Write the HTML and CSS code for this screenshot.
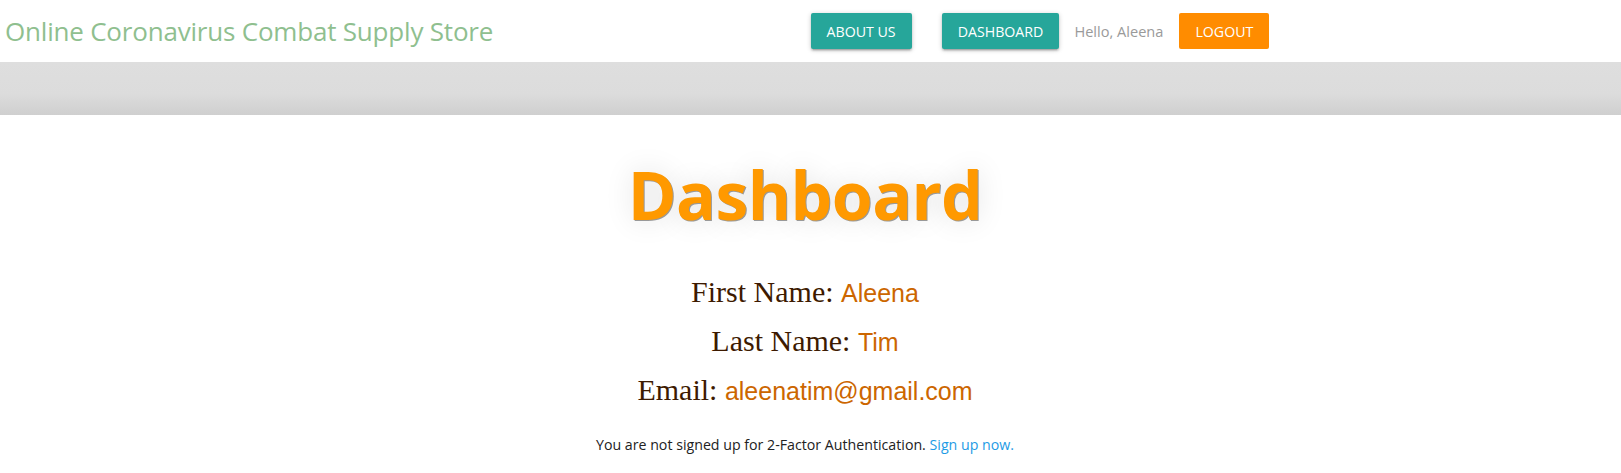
FILE: index.html
```html
<!DOCTYPE html>
<html lang="en">
<head>
<meta charset="utf-8">
<title>Dashboard</title>
<link rel="stylesheet" href="styles.css">
</head>
<body>
<nav class="topnav">
  <div class="brand-side">
    <a class="brand" href="#">Online Coronavirus Combat Supply Store</a>
  </div>
  <ul class="links">
    <li><a class="btn btn-teal" href="#">About Us</a></li>
    <li class="gap-wide"><a class="btn btn-teal" href="#">Dashboard</a></li>
    <li class="hello">Hello, Aleena</li>
    <li><a class="btn btn-orange" href="#">Logout</a></li>
  </ul>
</nav>
<div class="banner"></div>
<main class="content">
  <h1 class="title">Dashboard</h1>
  <p class="info">First Name: <span class="val">Aleena</span></p>
  <p class="info">Last Name: <span class="val">Tim</span></p>
  <p class="info">Email: <span class="val">aleenatim@gmail.com</span></p>
  <p class="note">You are not signed up for 2-Factor Authentication. <a href="#" class="link">Sign up now.</a></p>
</main>
</body>
</html>
```
FILE: styles.css
```css
* { box-sizing: border-box; }
html, body { margin: 0; padding: 0; background: #fff; }
body { font-family: "Open Sans", "Noto Sans", sans-serif; color: #222; }

.topnav {
  display: flex;
  align-items: center;
  height: 62px;
  background: #fff;
}
.brand-side { flex: 0 0 50%; padding-left: 5px; }
.brand {
  color: #8fbf8f;
  text-decoration: none;
  font-size: 26px;
  letter-spacing: -0.2px;
}
.links {
  flex: 0 0 50%;
  display: flex;
  align-items: center;
  list-style: none;
  margin: 0;
  padding: 0;
}
.links li { display: flex; align-items: center; }
.gap-wide { margin-left: 30px; }
.hello { margin: 0 16px 0 15px; color: #9a9a9a; font-size: 14.6px; }
.btn {
  display: inline-block;
  height: 36px;
  line-height: 37px;
  padding: 0 16px;
  color: #fff;
  text-decoration: none;
  text-transform: uppercase;
  font-size: 14.2px;
  border-radius: 2px;
}
.btn-teal {
  background: #26a69a;
  box-shadow: 0 2px 2px 0 rgba(0,0,0,0.14), 0 3px 1px -2px rgba(0,0,0,0.12), 0 1px 5px 0 rgba(0,0,0,0.2);
}
.btn-orange { background: #ff8c00; }

.banner {
  height: 53px;
  background: linear-gradient(to bottom, #dedede 0%, #dcdcdc 60%, #cfcfcf 100%);
}

.content { text-align: center; padding-top: 39px; padding-right: 11px; }
.title {
  margin: 0;
  font-size: 66px;
  line-height: 80px;
  font-weight: 700;
  color: #ff9900;
  letter-spacing: -0.5px;
  text-shadow: 1px 1px 0 #999, 0 0 28px rgba(0,0,0,0.13);
}
.info {
  margin: 0;
  font-family: "Liberation Serif", "Times New Roman", serif;
  font-size: 30px;
  line-height: 48px;
  color: #3d1a00;
}
.info:first-of-type { margin-top: 34px; }
.val {
  font-family: "Liberation Sans", Arial, sans-serif;
  font-size: 25px;
  color: #cc6600;
}
.note {
  margin: 20px 0 0;
  font-size: 14.2px;
  color: #222;
}
.link { color: #1e9be5; text-decoration: none; }
```
